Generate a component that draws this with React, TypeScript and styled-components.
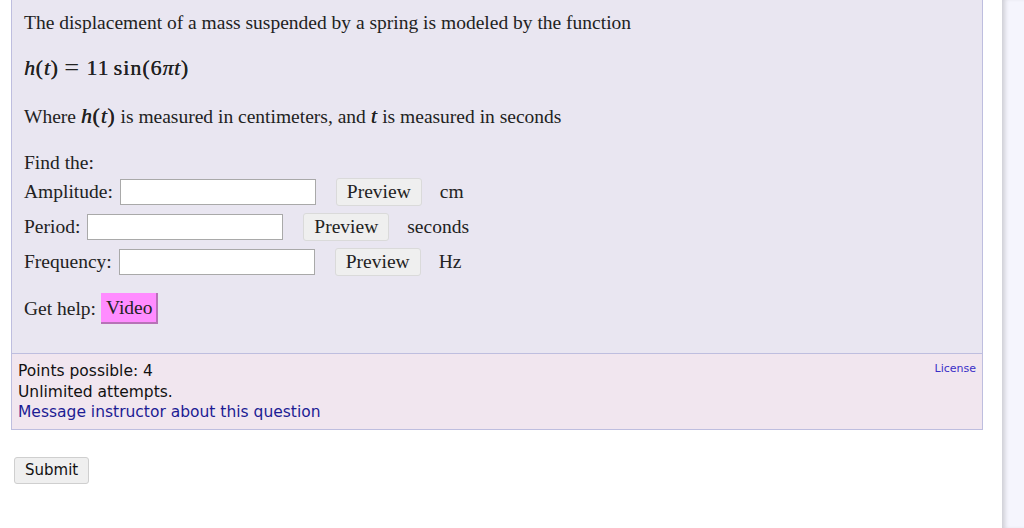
import React from "react";
import styled, { createGlobalStyle } from "styled-components";

const GlobalStyle = createGlobalStyle`
  html, body {
    margin: 0;
    padding: 0;
    background: #ffffff;
  }
  body {
    font-family: "Liberation Serif", "Times New Roman", serif;
    color: #222;
    overflow: hidden;
  }
`;

const Page = styled.div`
  display: flex;
  width: 1024px;
  height: 528px;
`;

const Main = styled.div`
  flex: 1;
  padding: 0 19px 0 11px;
`;

const Sidebar = styled.div`
  width: 22px;
  background: #f5f5fd;
  box-shadow: inset 5px 0 4px -2px #cfcfd6;
`;

const QuestionBox = styled.div`
  background: #e9e6f1;
  border: 1px solid #bebedf;
  border-top: none;
  border-bottom: none;
  padding: 12px 12px 29px;
  font-size: 19.5px;
`;

const Para = styled.p<{ gap?: number }>`
  margin: 0 0 ${(p) => p.gap ?? 25}px;
  height: 22px;
  line-height: 22px;
  white-space: nowrap;
`;

const Var = styled.i`
  font-family: "Liberation Serif", "Times New Roman", serif;
  font-size: 22px;
  line-height: 1;
  letter-spacing: 0.5px;
  text-shadow: 0.3px 0 0 #222;
`;

const MathNum = styled.span<{ space?: number }>`
  font-family: "Liberation Serif", "Times New Roman", serif;
  font-size: 22px;
  line-height: 1;
  letter-spacing: 1px;
  margin-right: ${(p) => p.space ?? 0}px;
  text-shadow: 0.3px 0 0 #222;
`;

const Eq = styled.span`
  display: inline-block;
  margin: 0 8px 0 6px;
  font-size: 24px;
  line-height: 1;
  transform: scaleX(1.1);
`;

const AnswerRow = styled.div`
  display: flex;
  align-items: center;
  height: 35px;
  white-space: nowrap;
`;

const Field = styled.input`
  width: 190px;
  height: 22px;
  margin-left: 7px;
  border: 1px solid #a9a9a9;
  background: #fff;
  padding: 1px 2px;
`;

const PreviewButton = styled.button`
  margin-left: 20px;
  height: 28px;
  padding: 0 10px;
  font-family: "Liberation Serif", "Times New Roman", serif;
  font-size: 19.5px;
  color: #222;
  background: #efefef;
  border: 1px solid #dadada;
  border-radius: 3px;
`;

const Unit = styled.span`
  margin-left: 18px;
`;

const HelpRow = styled.div`
  display: flex;
  align-items: center;
  margin-top: 14px;
  height: 31px;
`;

const VideoButton = styled.button`
  margin-left: 5px;
  height: 31px;
  padding: 0 3px 0 5px;
  font-family: "Liberation Serif", "Times New Roman", serif;
  font-size: 19.5px;
  color: #222;
  background: #ff8cff;
  border: none;
  border-right: 2px solid #b772b7;
  border-bottom: 2px solid #b772b7;
`;

const Footer = styled.div`
  position: relative;
  background: #f1e6ef;
  border: 1px solid #bebedf;
  padding: 7px 6px 6px;
  font-family: "DejaVu Sans", Tahoma, sans-serif;
  font-size: 15.5px;
  line-height: 20.5px;
  color: #111;
`;

const FooterLink = styled.a`
  color: #1c1c94;
  text-decoration: none;
`;

const License = styled.a`
  position: absolute;
  top: 5px;
  right: 6px;
  font-size: 11px;
  color: #3a2fc7;
  text-decoration: none;
`;

const SubmitButton = styled.button`
  margin: 27px 0 0 3px;
  height: 27px;
  padding: 0 10px;
  font-family: "DejaVu Sans", Tahoma, sans-serif;
  font-size: 15px;
  color: #111;
  background: #efefef;
  border: 1px solid #cfcfcf;
  border-radius: 3px;
`;

const answers = [
  { label: "Amplitude:", unit: "cm" },
  { label: "Period:", unit: "seconds" },
  { label: "Frequency:", unit: "Hz" },
];

const HT = () => (
  <>
    <Var>h</Var>
    <MathNum>(</MathNum>
    <Var>t</Var>
    <MathNum>)</MathNum>
  </>
);

export default function App() {
  return (
    <Page>
      <GlobalStyle />
      <Main>
        <QuestionBox>
          <Para gap={21}>
            The displacement of a mass suspended by a spring is modeled by the function
          </Para>
          <Para gap={28}>
            <HT />
            <Eq>=</Eq>
            <MathNum space={4}>11</MathNum>
            <MathNum>sin(6</MathNum>
            <Var>π</Var>
            <Var>t</Var>
            <MathNum>)</MathNum>
          </Para>
          <Para>
            Where <HT /> is measured in centimeters, and <Var>t</Var> is measured in seconds
          </Para>
          <Para gap={0}>Find the:</Para>
          {answers.map((a) => (
            <AnswerRow key={a.label}>
              {a.label}
              <Field type="text" />
              <PreviewButton>Preview</PreviewButton>
              <Unit>{a.unit}</Unit>
            </AnswerRow>
          ))}
          <HelpRow>
            Get help:
            <VideoButton>Video</VideoButton>
          </HelpRow>
        </QuestionBox>
        <Footer>
          <License href="#">License</License>
          <div>Points possible: 4</div>
          <div>Unlimited attempts.</div>
          <FooterLink href="#">Message instructor about this question</FooterLink>
        </Footer>
        <SubmitButton>Submit</SubmitButton>
      </Main>
      <Sidebar />
    </Page>
  );
}
